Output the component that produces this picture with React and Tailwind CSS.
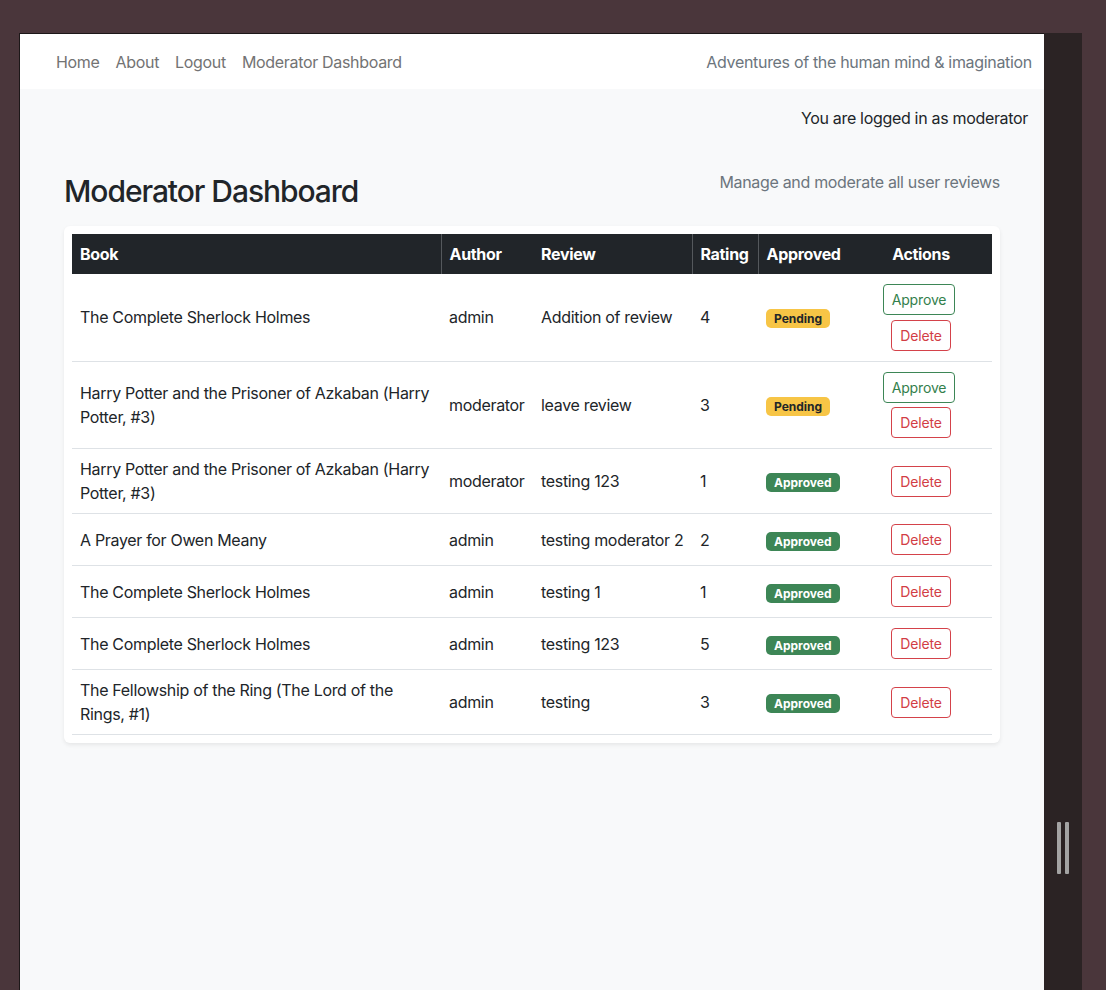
import React from "react";

const reviews = [
  { book: "The Complete Sherlock Holmes", author: "admin", review: "Addition of review", rating: 4, approved: false },
  { book: "Harry Potter and the Prisoner of Azkaban (Harry Potter, #3)", author: "moderator", review: "leave review", rating: 3, approved: false },
  { book: "Harry Potter and the Prisoner of Azkaban (Harry Potter, #3)", author: "moderator", review: "testing 123", rating: 1, approved: true },
  { book: "A Prayer for Owen Meany", author: "admin", review: "testing moderator 2", rating: 2, approved: true },
  { book: "The Complete Sherlock Holmes", author: "admin", review: "testing 1", rating: 1, approved: true },
  { book: "The Complete Sherlock Holmes", author: "admin", review: "testing 123", rating: 5, approved: true },
  { book: "The Fellowship of the Ring (The Lord of the Rings, #1)", author: "admin", review: "testing", rating: 3, approved: true },
];

function Badge({ approved }) {
  return approved ? (
    <span className="inline-block rounded-[5px] bg-[#3d8656] px-[8px] py-[4px] text-[12px] font-bold leading-[11px] tracking-normal text-white">Approved</span>
  ) : (
    <span className="inline-block rounded-[5px] bg-[#f7c546] px-[8px] py-[4px] text-[12px] font-bold leading-[11px] tracking-normal text-[#212529]">Pending</span>
  );
}

export default function App() {
  return (
    <div className="flex h-[990px] w-[1106px] overflow-hidden bg-[#4a363b] pl-[19px] pt-[33px] font-['Inter',sans-serif] text-[16px] tracking-[-0.02em] text-[#212529]">
      <div className="flex h-[957px] w-[1025px] flex-col border-l border-t border-[#1c1718] bg-[#f8f9fa]">
        <nav className="flex h-[55px] shrink-0 items-center justify-between bg-white pl-[28px] pr-[12px]">
          <div className="flex">
            {["Home", "About", "Logout", "Moderator Dashboard"].map((l) => (
              <a key={l} className="px-2 leading-6 text-[#737373]">{l}</a>
            ))}
          </div>
          <span className="leading-6 text-[#6c757d]">Adventures of the human mind &amp; imagination</span>
        </nav>

        <div className="pr-[16px] pt-[17px] text-right leading-6">You are logged in as moderator</div>

        <div className="mx-[44px] mt-[42px]">
          <div className="flex items-start justify-between">
            <h2 className="text-[30px] font-medium leading-[38px] tracking-[-0.035em] text-[#212529]">Moderator Dashboard</h2>
            <p className="-mt-[2px] leading-6 text-[#6c757d]">Manage and moderate all user reviews</p>
          </div>

          <div className="mt-[16px] rounded-md bg-white p-2 shadow-[0_2px_4px_rgba(0,0,0,0.075)]">
            <table className="w-full table-fixed border-collapse text-left">
              <thead>
                <tr className="bg-[#212529] text-white">
                  <th className="w-[369px] px-2 py-2 font-bold leading-6">Book</th>
                  <th className="w-[92px] border-l border-[#54585c] px-2 py-2 font-bold leading-6">Author</th>
                  <th className="w-[159px] px-2 py-2 font-bold leading-6">Review</th>
                  <th className="w-[66px] border-l border-[#54585c] px-2 py-2 font-bold leading-6">Rating</th>
                  <th className="w-[92px] border-l border-[#54585c] px-2 py-2 font-bold leading-6">Approved</th>
                  <th className="w-[142px] px-2 py-2 text-center font-bold leading-6">Actions</th>
                </tr>
              </thead>
              <tbody>
                {reviews.map((r, i) => (
                  <tr key={i} className="border-b border-[#dee2e6]">
                    <td className="px-2 py-2 align-middle leading-6">{r.book}</td>
                    <td className="px-2 py-2 align-middle leading-6">{r.author}</td>
                    <td className="px-2 py-2 align-middle leading-6">{r.review}</td>
                    <td className="px-2 py-2 align-middle leading-6">{r.rating}</td>
                    <td className="px-2 py-2 align-middle leading-6"><Badge approved={r.approved} /></td>
                    <td className="px-2 py-2 align-middle">
                      <div className="flex flex-col items-center">
                        {!r.approved && (
                          <div className="flex h-[35.5px] items-center">
                            <button className="mr-1 rounded-[4px] border border-[#3d8656] px-2 py-1 text-[14px] leading-[21px] tracking-[-0.01em] text-[#33804c]">Approve</button>
                          </div>
                        )}
                        <div className="flex h-[35px] items-center">
                          <button className="rounded-[4px] border border-[#d4424a] px-2 py-1 text-[14px] leading-[21px] tracking-[-0.01em] text-[#d23d45]">Delete</button>
                        </div>
                      </div>
                    </td>
                  </tr>
                ))}
              </tbody>
            </table>
          </div>
        </div>
      </div>

      <div className="h-[957px] w-[38px] bg-[#2b2324] pl-[13px] pt-[789px]">
        <div className="flex gap-[4px]">
          <div className="h-[52px] w-[4px] rounded-[1px] bg-[#a3a3a3]" />
          <div className="h-[52px] w-[4px] rounded-[1px] bg-[#a3a3a3]" />
        </div>
      </div>
    </div>
  );
}
